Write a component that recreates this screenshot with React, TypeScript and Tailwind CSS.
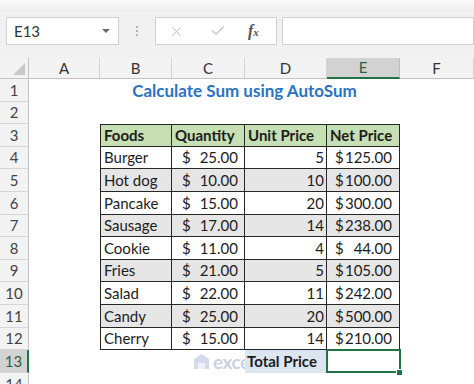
import { X, Check } from "lucide-react";
import clsx from "clsx";

const colW = ["w-[71px]", "w-[72px]", "w-[73px]", "w-[82px]", "w-[73px]", "w-[74px]"];
const rowH = [
    "h-[23px]", "h-[22px]", "h-[23px]", "h-[22px]", "h-[23px]", "h-[23px]", "h-[22px]",
    "h-[23px]", "h-[22px]", "h-[23px]", "h-[23px]", "h-[22px]", "h-[23px]",
];

const foods: [string, string, number, string][] = [
    ["Burger", "25.00", 5, "125.00"],
    ["Hot dog", "10.00", 10, "100.00"],
    ["Pancake", "15.00", 20, "300.00"],
    ["Sausage", "17.00", 14, "238.00"],
    ["Cookie", "11.00", 4, "44.00"],
    ["Fries", "21.00", 5, "105.00"],
    ["Salad", "22.00", 11, "242.00"],
    ["Candy", "25.00", 20, "500.00"],
    ["Cherry", "15.00", 14, "210.00"],
];

interface RowProps {
    n: number,
    active?: boolean,
    children?: React.ReactNode
}

const Row = ({ n, active, children }: RowProps) => {
    return (
        <div className={clsx("flex", rowH[n - 1])}>
            <div className={clsx(
                "w-[29px] shrink-0 flex items-center justify-center text-[15px] border-b border-[#d6d6d6]",
                active ? "bg-[#d2d2d2] text-[#2f5f43] border-r-2 border-r-[#217346]" : "bg-[#f3f3f3] text-[#444] border-r border-r-[#c3c3c3]"
            )}>
                {n}
            </div>
            {children}
        </div>
    )
}

const Cell = ({ c, className, children }: { c: number, className?: string, children?: React.ReactNode }) => (
    <div className={clsx("h-full shrink-0 flex items-center", colW[c], className)}>{children}</div>
)

const Empty = () => (
    <>
        {colW.map((_, i) => <Cell key={i} c={i} />)}
    </>
)

const App = () => {
    const cols = ["A", "B", "C", "D", "E", "F"];
    return (
        <div className="w-[474px] h-[384px] overflow-hidden bg-[#f1f1f1] text-[#1c1c1c] font-['Lato','Liberation_Sans',sans-serif]">
            <div className="h-[12px] bg-gradient-to-b from-[#fbfbfb] to-[#ededed]" />

            {/* formula bar */}
            <div className="h-[46px] flex items-start pt-[5px] pl-[6px]">
                <div className="w-[113px] h-[28px] bg-white border border-[#d0d0d0] flex items-center justify-between pl-[7px] pr-[8px]">
                    <span className="text-[15px] text-[#333]">E13</span>
                    <span className="w-0 h-0 border-l-[4px] border-r-[4px] border-t-[4px] border-l-transparent border-r-transparent border-t-[#6a6a6a]" />
                </div>
                <div className="w-[36px] h-[28px] flex flex-col items-center justify-center gap-[2px]">
                    <span className="w-[2px] h-[2px] bg-[#b5b5b5]" />
                    <span className="w-[2px] h-[2px] bg-[#b5b5b5]" />
                    <span className="w-[2px] h-[2px] bg-[#b5b5b5]" />
                </div>
                <div className="w-[122px] h-[28px] bg-white border border-[#d0d0d0] flex items-center pl-[13px]">
                    <X size={15} strokeWidth={1.6} className="text-[#bcbcbc]" />
                    <Check size={16} strokeWidth={2} className="text-[#c4c4c4] ml-[26px]" />
                    <span className="ml-[22px] text-[16px] italic font-bold font-['Liberation_Serif',serif] text-[#555]">f<span className="text-[11px]">x</span></span>
                </div>
                <div className="ml-[5px] flex-1 h-[28px] bg-white border border-[#d0d0d0]" />
            </div>

            {/* column headers */}
            <div className="flex h-[21px] bg-[#f3f3f3]">
                <div className="w-[29px] shrink-0 border-r border-b border-[#c3c3c3] relative">
                    <span className="absolute right-[3px] bottom-[3px] w-0 h-0 border-l-[12px] border-b-[12px] border-l-transparent border-b-[#c9c9c9]" />
                </div>
                {cols.map((c, i) => (
                    <div key={c} className={clsx(
                        "shrink-0 flex items-center justify-center text-[15px] border-r",
                        colW[i],
                        c === "E" ? "bg-[#d2d2d2] text-[#2f5f43] border-b-2 border-b-[#217346] border-r-[#bdbdbd]" : "text-[#333] border-b border-[#c3c3c3] border-r-[#d4d4d4]"
                    )}>{c}</div>
                ))}
            </div>

            {/* sheet */}
            <div className="bg-white text-[15px]">
                <Row n={1}>
                    <Cell c={0} />
                    <div className="w-[300px] h-full shrink-0 flex items-center justify-center pr-[11px] font-bold text-[17px] text-[#2a73c3]">
                        Calculate Sum using AutoSum
                    </div>
                    <Cell c={5} />
                </Row>
                <Row n={2}><Empty /></Row>
                <Row n={3}>
                    <Cell c={0} />
                    <Cell c={1} className="bg-[#c6e0b4] font-bold border-y border-x border-[#262626] pl-[3px]">Foods</Cell>
                    <Cell c={2} className="bg-[#c6e0b4] font-bold border-y border-r border-[#262626] pl-[3px]">Quantity</Cell>
                    <Cell c={3} className="bg-[#c6e0b4] font-bold border-y border-r border-[#262626] pl-[3px]">Unit Price</Cell>
                    <Cell c={4} className="bg-[#c6e0b4] font-bold border-y border-r border-[#262626] pl-[3px]">Net Price</Cell>
                    <Cell c={5} />
                </Row>
                {foods.map(([name, qty, unit, net], i) => {
                    const shade = i % 2 === 1 ? "bg-[#e6e6e6]" : "bg-white";
                    return (
                        <Row key={name} n={i + 4}>
                            <Cell c={0} />
                            <Cell c={1} className={clsx(shade, "border-x border-b border-[#262626] pl-[3px]")}>{name}</Cell>
                            <Cell c={2} className={clsx(shade, "border-r border-b border-[#262626] justify-between pl-[10px] pr-[6px]")}>
                                <span>$</span><span>{qty}</span>
                            </Cell>
                            <Cell c={3} className={clsx(shade, "border-r border-b border-[#262626] justify-end pr-[2px]")}>{unit}</Cell>
                            <Cell c={4} className={clsx(shade, "border-r border-b border-[#262626] justify-between pl-[8px] pr-[7px]")}>
                                <span>$</span><span>{net}</span>
                            </Cell>
                            <Cell c={5} />
                        </Row>
                    )
                })}
                <Row n={13} active>
                    <Cell c={0} />
                    <Cell c={1} />
                    <Cell c={2} className="overflow-hidden">
                        <div className="ml-[21px] flex items-center gap-[3px] text-[#c9d2e4]">
                            <svg width="17" height="17" viewBox="0 0 17 17" className="shrink-0">
                                <path d="M8.5 1 L16 6 L16 16 L1 16 L1 6 Z" fill="#d3dbea" />
                                <path d="M5 16 L5 10 L12 10 L12 16" fill="#eef1f7" />
                            </svg>
                            <span className="text-[19px] font-bold tracking-tight leading-none">exce</span>
                        </div>
                    </Cell>
                    <Cell c={3} className="bg-[#dce6f1] font-bold pl-[2px]">Total Price</Cell>
                    <Cell c={4} className="relative">
                        <div className="absolute -left-[1px] -top-[1px] w-[75px] h-[24px] border-2 border-[#217346]" />
                        <span className="absolute -right-[3px] -bottom-[3px] w-[7px] h-[7px] bg-[#217346] border border-white" />
                    </Cell>
                    <Cell c={5} />
                </Row>
                <div className="flex h-[20px]">
                    <div className="w-[29px] shrink-0 flex items-start justify-center pt-[4px] text-[15px] leading-none bg-[#f3f3f3] text-[#444] border-r border-[#c3c3c3]">14</div>
                    <Empty />
                </div>
            </div>
        </div>
    )
}

export default App
